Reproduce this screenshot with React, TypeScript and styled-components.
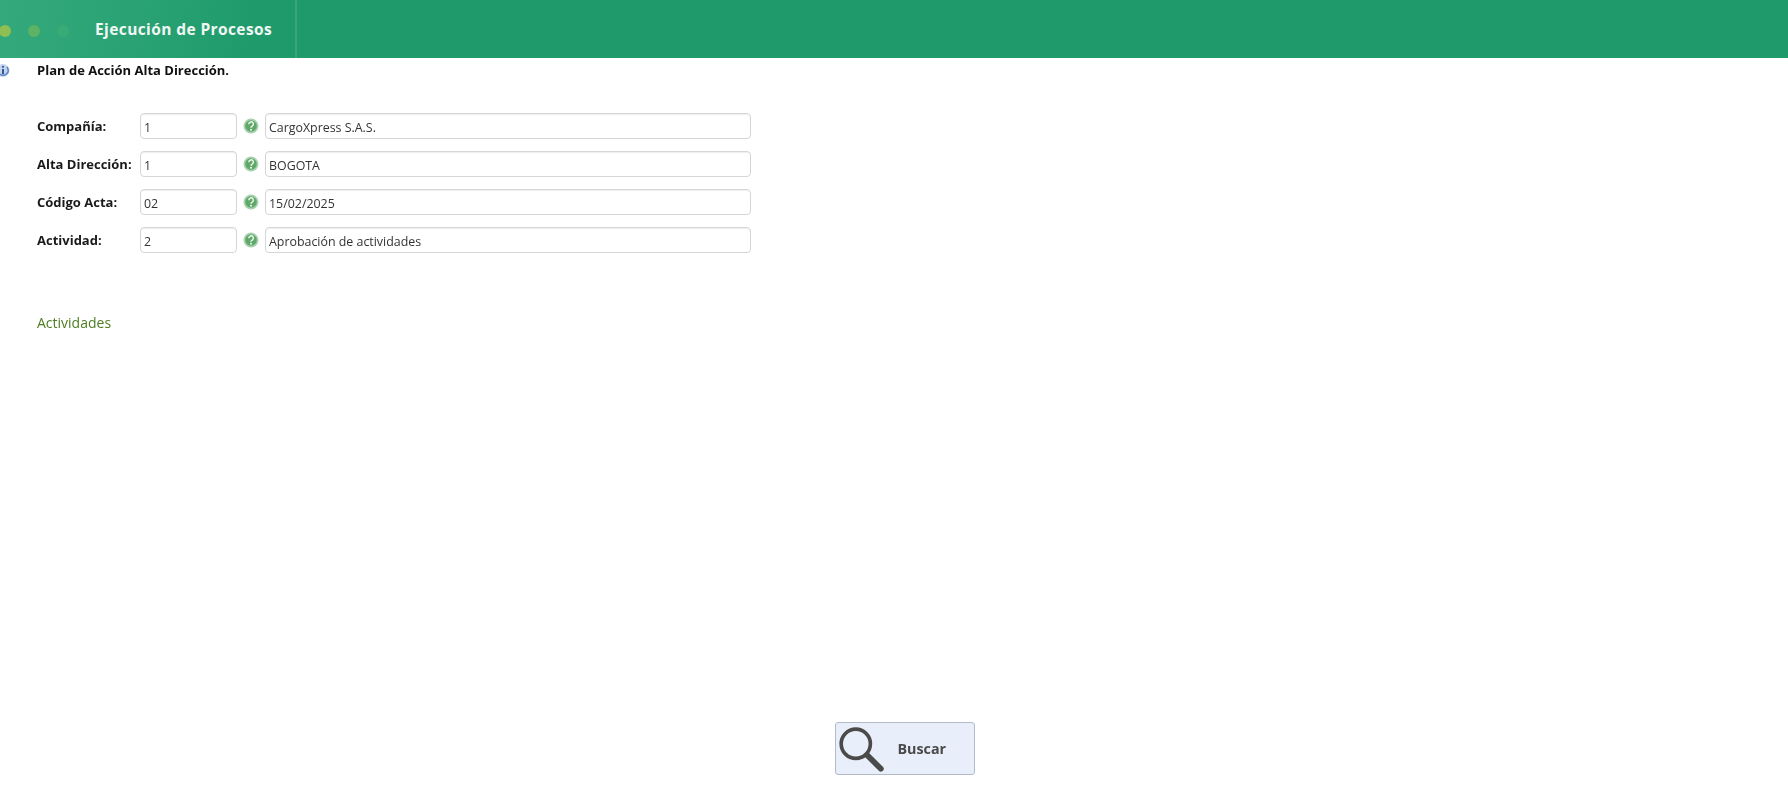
import React from "react";
import styled, { createGlobalStyle } from "styled-components";

const Global = createGlobalStyle`
  html, body { margin: 0; padding: 0; background: #fff; overflow: hidden; }
  body { font-family: "Open Sans", "Noto Sans", "Liberation Sans", sans-serif; }
`;
const Page = styled.div`
  width: 1788px; height: 795px; display: flex; flex-direction: column; overflow: hidden;
  filter: blur(0.35px);
`;
const Header = styled.header`
  height: 58px; flex: none; display: flex; align-items: stretch; overflow: hidden;
  background: #1f9b6b;
`;
const HeaderTab = styled.div`
  width: 295px; flex: none; display: flex; align-items: center;
  border-right: 2px solid #37a67b;
  background: linear-gradient(100deg, #34a97c 0%, #2aa274 45%, #1f9b6b 85%);
`;
const Dots = styled.div`
  display: flex; gap: 17px; margin-left: -1px; width: 96px; flex: none; margin-top: 4px;
`;
const Dot = styled.span<{ $c: string }>`
  width: 12px; height: 12px; border-radius: 50%; background: ${p => p.$c}; flex: none;
`;
const HeaderTitle = styled.h1`
  margin: 0; color: #f1f8f4; font-size: 15.5px; font-weight: 700; letter-spacing: 0.4px; white-space: nowrap;
`;
const Main = styled.main`
  flex: 1; display: flex; flex-direction: column;
`;
const Intro = styled.div`
  display: flex; align-items: center; height: 24px; margin-left: -4px;
`;
const IntroText = styled.p`
  margin: 0 0 0 27px; font-size: 13px; font-weight: 700; color: #111; white-space: nowrap;
`;
const Form = styled.form`
  margin: 31px 0 0 37px; display: flex; flex-direction: column; gap: 12px;
`;
const Row = styled.div`
  display: flex; align-items: center; height: 26px;
`;
const Label = styled.label`
  width: 103px; flex: none; font-size: 13px; font-weight: 700; color: #1a1a1a; white-space: nowrap;
`;
const Field = styled.input<{ $w: number }>`
  width: ${p => p.$w}px; height: 26px; box-sizing: border-box; flex: none;
  border: 1px solid #d6d6d6; border-radius: 4px; background: #fff; padding: 3px 3px 0;
  font: 400 12.4px "Open Sans", "Noto Sans", sans-serif; color: #333; outline: none;
  box-shadow: inset 0 1px 1px #eee;
`;
const HelpIcon = styled.svg`
  width: 16px; height: 16px; margin: -1px 6px 0 6px; flex: none;
`;
const SectionLink = styled.a`
  margin: 60px 0 0 37px; font-size: 14px; color: #4e7d22; text-decoration: none; align-self: flex-start;
`;
const Footer = styled.div`
  margin-top: auto; display: flex; justify-content: center; padding: 0 0 20px 21px;
`;
const SearchButton = styled.button`
  width: 140px; height: 53px; display: flex; align-items: center; padding: 0 0 0 1px; box-sizing: border-box;
  background: #e8eefa; border: 1px solid #b4bac8; border-radius: 3px;
  font: 700 14.3px "Open Sans", "Noto Sans", sans-serif; color: #4a4a4a;
`;
const SearchLabel = styled.span`
  margin-left: 13px;
`;

const Help = () => (
  <HelpIcon viewBox="0 0 16 16">
    <circle cx="8" cy="8" r="7.5" fill="#a8d2b0" />
    <circle cx="8" cy="8" r="5.8" fill="#5fa86a" />
    <path d="M5.8 6.2a2.3 2.3 0 1 1 3.4 2c-.8.4-1.2.8-1.2 1.6" fill="none" stroke="#eef7ee" strokeWidth="1.5" />
    <circle cx="8" cy="11.8" r="1" fill="#eef7ee" />
  </HelpIcon>
);

const rows = [
  { label: "Compañía:", code: "1", desc: "CargoXpress S.A.S." },
  { label: "Alta Dirección:", code: "1", desc: "BOGOTA" },
  { label: "Código Acta:", code: "02", desc: "15/02/2025" },
  { label: "Actividad:", code: "2", desc: "Aprobación de actividades" },
];

export default function App() {
  return (
    <Page>
      <Global />
      <Header>
        <HeaderTab>
          <Dots>
            <Dot $c="#8fbf52" />
            <Dot $c="#5db264" />
            <Dot $c="#38ab76" />
          </Dots>
          <HeaderTitle>Ejecución de Procesos</HeaderTitle>
        </HeaderTab>
      </Header>
      <Main>
        <Intro>
          <svg width="14" height="15" viewBox="0 0 14 15" style={{ flex: "none" }}>
            <circle cx="7" cy="7.5" r="6.5" fill="#c4d4ee" />
            <path d="M2 9a5.5 5.5 0 0 0 10 0 6 6 0 0 0-1-5" fill="none" stroke="#5f86c4" strokeWidth="1.6" />
            <path d="M7 6v5" stroke="#34578f" strokeWidth="2" />
            <circle cx="7" cy="3.8" r="1.1" fill="#34578f" />
          </svg>
          <IntroText>Plan de Acción Alta Dirección.</IntroText>
        </Intro>
        <Form>
          {rows.map(r => (
            <Row key={r.label}>
              <Label>{r.label}</Label>
              <Field $w={97} defaultValue={r.code} />
              <Help />
              <Field $w={486} defaultValue={r.desc} />
            </Row>
          ))}
        </Form>
        <SectionLink>Actividades</SectionLink>
        <Footer>
          <SearchButton type="button">
            <svg width="48" height="48" viewBox="0 0 46 46">
              <circle cx="18" cy="18" r="14" fill="none" stroke="#4a4a4a" strokeWidth="3.5" />
              <path d="M29 29l13 13" stroke="#4a4a4a" strokeWidth="5.5" strokeLinecap="round" />
            </svg>
            <SearchLabel>Buscar</SearchLabel>
          </SearchButton>
        </Footer>
      </Main>
    </Page>
  );
}
